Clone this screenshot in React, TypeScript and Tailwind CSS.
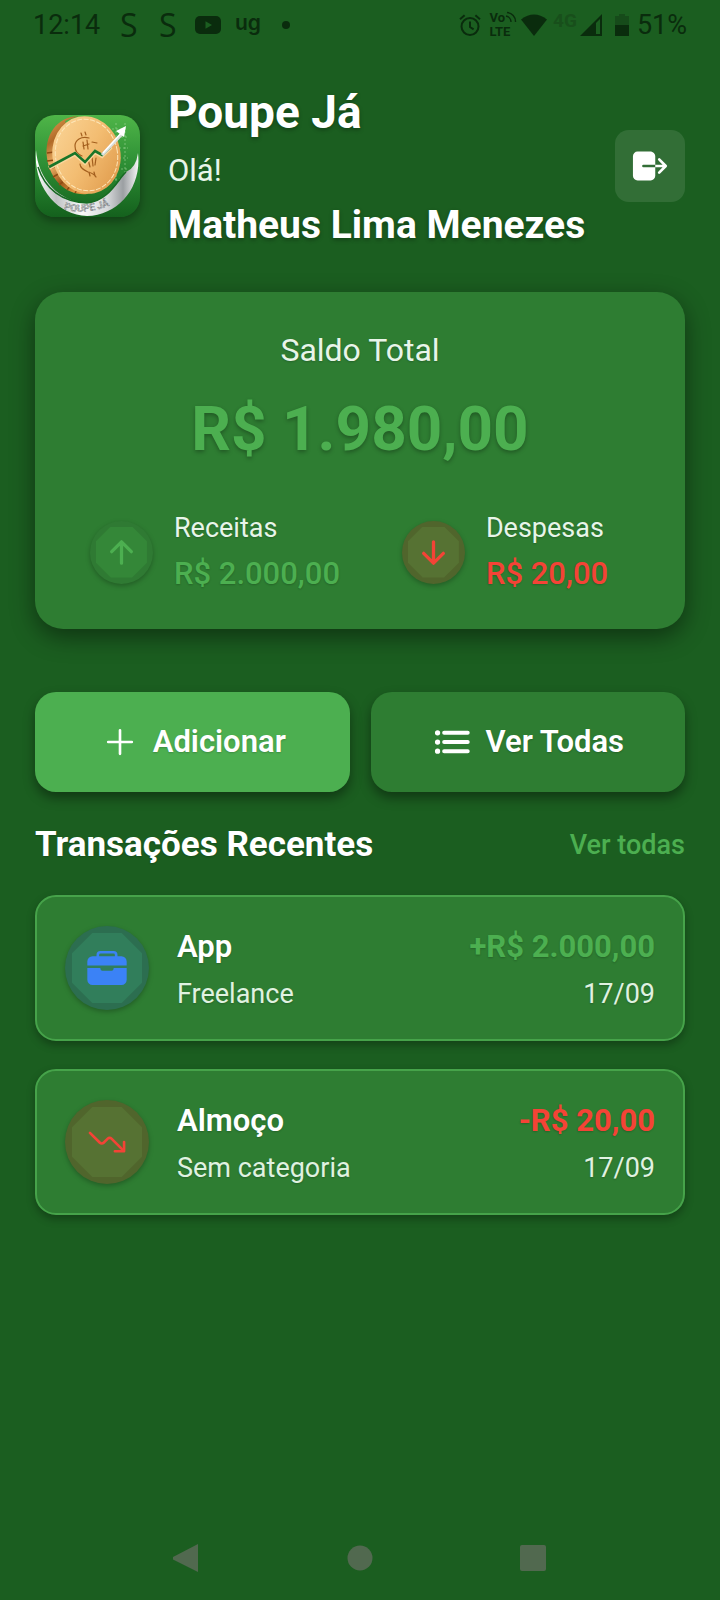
import type { ReactNode } from "react";
import {
  IoAdd,
  IoArrowDown,
  IoArrowUp,
  IoBriefcase,
  IoList,
  IoLogOut,
  IoTrendingDown,
} from "react-icons/io5";

const textShadow = "[text-shadow:0_2px_4px_rgba(0,0,0,0.3)]";
const softShadow = "[text-shadow:0_1px_2px_rgba(0,0,0,0.2)]";

function StatusBar() {
  return (
    <div className="flex h-[50px] items-center justify-between pl-[33px] pr-[33px] text-[#0a2c0d]">
      <div className="flex items-center">
        <span className="w-[87px] text-[27px] leading-8">12:14</span>
        <span className="w-[39px] font-['Open_Sans',sans-serif] text-[32px] font-medium leading-8">S</span>
        <span className="w-[36px] font-['Open_Sans',sans-serif] text-[32px] font-medium leading-8">S</span>
        <svg viewBox="0 0 26 18" className="h-[18px] w-[26px]" aria-hidden="true">
          <rect width="26" height="18" rx="5" fill="currentColor" />
          <path d="M10.5 5.2 17 9l-6.5 3.8z" fill="#1b5e20" />
        </svg>
        <span className="ml-[14px] w-[47px] pb-1 font-['Inter',sans-serif] text-[21px] font-semibold leading-7">ug</span>
        <span className="size-2 rounded-full bg-current" />
      </div>
      <div className="flex items-center">
        <svg viewBox="0 0 22 22" className="size-[22px]" fill="none" stroke="currentColor" strokeWidth="2" aria-hidden="true">
          <circle cx="11" cy="12.5" r="8.5" />
          <path d="M11 7.5v5.5l3.6 2.4" />
          <path d="M1 5.2 5.6 1.2M21 5.2 16.4 1.2" />
        </svg>
        <div className="ml-2 flex flex-col text-[13px] font-bold leading-[14px]">
          <span className="flex">
            Vo
            <svg viewBox="0 0 12 12" className="size-3" fill="none" stroke="currentColor" strokeWidth="1.4" aria-hidden="true">
              <path d="M1 5a6 6 0 0 1 5 6M2 1.5A9 9 0 0 1 10.500 11" />
            </svg>
          </span>
          <span>LTE</span>
        </div>
        <svg viewBox="0 0 26 22" className="ml-1 h-[22px] w-[26px]" aria-hidden="true">
          <path d="M0 5.500Q13-4.500 26 5.500L13 22z" fill="currentColor" />
        </svg>
        <span className="ml-[6px] pb-2 text-[19px] font-bold leading-5 text-[#184f1b]">4G</span>
        <svg viewBox="0 0 22 22" className="ml-[3px] size-[22px]" aria-hidden="true">
          <path d="M22 0v22H0zM20 5v15h-4V9z" fill="currentColor" fillRule="evenodd" />
        </svg>
        <svg viewBox="0 0 14 22" className="ml-[13px] h-[22px] w-[14px]" aria-hidden="true">
          <path d="M0 2h4V0h6v2h4v9H0z" fill="#164b1a" />
          <path d="M0 11h14v11H0z" fill="currentColor" />
        </svg>
        <span className="ml-2 text-[27px] leading-8">51%</span>
      </div>
    </div>
  );
}

function AppLogo() {
  return (
    <svg
      viewBox="0 0 105 102"
      className="h-[102px] w-[105px] shrink-0 rounded-[20px] shadow-[0_4px_10px_rgba(0,0,0,0.35)]"
      role="img"
      aria-label="Poupe Já"
    >
      <defs>
        <linearGradient id="lgBg" x1="0" y1="0" x2="0" y2="1">
          <stop offset="0" stopColor="#4fb548" />
          <stop offset="0.45" stopColor="#2f9136" />
          <stop offset="1" stopColor="#14611d" />
        </linearGradient>
        <linearGradient id="lgCoin" x1="0" y1="0" x2="1" y2="1">
          <stop offset="0" stopColor="#fbd79b" />
          <stop offset="0.5" stopColor="#f3bd72" />
          <stop offset="1" stopColor="#dc9444" />
        </linearGradient>
        <linearGradient id="lgEdge" x1="0" y1="0" x2="0.5" y2="1">
          <stop offset="0" stopColor="#e9a75a" />
          <stop offset="0.3" stopColor="#b06a28" />
          <stop offset="0.55" stopColor="#f0b468" />
          <stop offset="0.8" stopColor="#9c5518" />
          <stop offset="1" stopColor="#e0953f" />
        </linearGradient>
        <linearGradient id="lgBand" x1="0" y1="0" x2="1" y2="0">
          <stop offset="0" stopColor="#ffffff" />
          <stop offset="0.2" stopColor="#bfc2c4" />
          <stop offset="0.45" stopColor="#fafafa" />
          <stop offset="0.7" stopColor="#d5d7d9" />
          <stop offset="0.85" stopColor="#9b9fa2" />
          <stop offset="1" stopColor="#f6f6f6" />
        </linearGradient>
      </defs>
      <rect width="105" height="102" fill="url(#lgBg)" />
      <path d="M81 8v58M90 8v60M73 14h18M86 22h6M84 33h9M84 43h9M82 54h10M80 64h10" stroke="#a9dc9f" strokeWidth="0.8" strokeDasharray="2 2" fill="none" opacity="0.7" />
      <path d="M1 35C3 64 24 87 52 88C74 86 83 64 91 57Q101 53 103 38C107 72 84 100 52 101C22 100-2 72 1 35z" fill="url(#lgBand)" />
      <path d="M3 52C10 74 27 87 52 88C74 86 83 64 91 57" stroke="#176a22" strokeWidth="1.500" fill="none" />
      <path d="M43 1C22 2 9 20 12 43C15 66 33 81 52 79L60 74 30 6z" fill="url(#lgEdge)" />
      <path d="M12 38l7-1M12 46l8-1M14 54l8-3M18 62l7-4M24 70l6-5M32 75l4-5M40 78l3-5" stroke="#8f4b12" strokeWidth="1.500" />
      <ellipse cx="51.500" cy="40" rx="34" ry="39" transform="rotate(-12 51.500 40)" fill="url(#lgCoin)" />
      <ellipse cx="51.500" cy="40" rx="31" ry="36" transform="rotate(-12 51.500 40)" fill="none" stroke="#fde6b8" strokeWidth="1" strokeDasharray="5 1.500" />
      <g fill="none" stroke="#a35f1e" strokeWidth="1.200" strokeLinecap="round">
        <path d="M46 18l1 3M50 17l1 3M54 23c-8-2-14 2-14 8 0 5 2 8 7 10M48 27l1 7M52 25l1 9M48 31l6-2M57 27l5 1" />
        <path d="M53 44l2 8M57 42l1 9M61 43l-1 7M45 49c0 4 4 6 8 8 4 1 7 3 8 5M54 57l1 4M59 57l1 4" />
      </g>
      <path d="M14 53 40 39 50 48 60 37 67 41 76 32" fill="none" stroke="#f9d59b" strokeWidth="4" />
      <path d="M14 52 40 38 50 47 60 36 67 40 75 32" fill="none" stroke="#197528" strokeWidth="2.600" />
      <path d="M67 40 88 18" fill="none" stroke="#d9dedb" strokeWidth="3.200" />
      <path d="M68 38 88 16" fill="none" stroke="#ffffff" strokeWidth="1.500" />
      <path d="M91 11 89 22 81 16z" fill="#ffffff" />
      <path id="logoArc" d="M24 93Q52 103 84 86" fill="none" />
      <text fontFamily="Roboto, sans-serif" fontSize="10" fontWeight="700" fill="#b4b7b9" stroke="#6b6f72" strokeWidth="0.400" strokeDasharray="2 1">
        <textPath href="#logoArc" startOffset="5">POUPE JÁ</textPath>
      </text>
    </svg>
  );
}

interface BadgeProps {
  large?: boolean;
  ring: string;
  face: string;
  icon: ReactNode;
}

/* Round badge with a lighter octagonal face and a shaded rim. */
function Badge({ large, ring, face, icon }: BadgeProps) {
  return (
    <div
      className={`grid shrink-0 place-items-center rounded-full shadow-[0_2px_5px_rgba(0,0,0,0.25)] ${ring} ${
        large ? "size-[84px]" : "size-[63px]"
      }`}
    >
      <div
        className={`grid place-items-center [clip-path:polygon(29%_0,71%_0,100%_29%,100%_71%,71%_100%,29%_100%,0_71%,0_29%)] ${face} ${
          large ? "size-[70px] text-[42px]" : "size-[51px] text-[35px]"
        }`}
      >
        {icon}
      </div>
    </div>
  );
}

interface SummaryProps {
  label: string;
  value: string;
  color: string;
  badge: ReactNode;
}

function Summary({ label, value, color, badge }: SummaryProps) {
  return (
    <div className="flex flex-1 items-center justify-center gap-[21px]">
      {badge}
      <div className="flex flex-col gap-3">
        <span className={`text-[27px] leading-8 text-[#e8f5e9] ${softShadow}`}>{label}</span>
        <span className={`text-[31px] font-medium leading-9 ${color} ${softShadow}`}>{value}</span>
      </div>
    </div>
  );
}

interface TransactionProps {
  title: string;
  category: string;
  amount: string;
  date: string;
  color: string;
  badge: ReactNode;
}

function Transaction({ title, category, amount, date, color, badge }: TransactionProps) {
  return (
    <li className="flex items-center gap-7 rounded-[21px] border-2 border-[#46a34a] bg-[#2e7d32] px-7 py-[29px] shadow-[0_4px_8px_rgba(0,0,0,0.3)]">
      {badge}
      <div className="flex flex-1 flex-col gap-[11px]">
        <span className={`text-[31px] font-semibold leading-10 ${softShadow}`}>{title}</span>
        <span className={`text-[27px] leading-8 text-[#e0f2e1] ${softShadow}`}>{category}</span>
      </div>
      <div className="flex flex-col items-end gap-[11px]">
        <span className={`text-[31px] font-bold leading-10 ${color} ${softShadow}`}>{amount}</span>
        <span className={`text-[27px] leading-8 text-[#e0f2e1] ${softShadow}`}>{date}</span>
      </div>
    </li>
  );
}

export default function App() {
  return (
    <div className="flex min-h-screen flex-col bg-[#1b5e20] font-['Roboto',sans-serif] text-white">
      <StatusBar />

      <main className="flex flex-col px-[35px] pt-8">
        <header className="flex items-center gap-7">
          <AppLogo />
          <div className="flex flex-1 flex-col gap-[10px]">
            <h1 className={`text-[46px] font-bold leading-[60px] ${textShadow}`}>Poupe Já</h1>
            <p className="text-[31px] leading-[38px] text-[#e8f5e9]">Olá!</p>
            <p className={`whitespace-nowrap text-[39px] font-bold leading-[50px] ${textShadow}`}>
              Matheus Lima Menezes
            </p>
          </div>
          <button type="button" aria-label="Sair" className="grid h-[72px] w-[70px] shrink-0 place-items-center rounded-[14px] bg-white/10">
            <IoLogOut className="size-[42px]" />
          </button>
        </header>

        <section className="mt-[42px] flex flex-col rounded-[28px] bg-[#2e7d32] px-[35px] pb-[37px] pt-[35px] shadow-[0_8px_24px_rgba(0,0,0,0.45)]">
          <h2 className={`text-center text-[32px] leading-[46px] text-[#e8f5e9] ${softShadow}`}>Saldo Total</h2>
          <p className={`mt-[19px] text-center text-[62px] font-bold leading-[74px] text-[#4caf50] ${textShadow}`}>
            R$ 1.980,00
          </p>
          <div className="mt-[46px] flex">
            <Summary
              label="Receitas"
              value="R$ 2.000,00"
              color="text-[#4caf50]"
              badge={<Badge ring="bg-[#2f7a33]" face="bg-[#348738]" icon={<IoArrowUp className="text-[#4caf50]" />} />}
            />
            <Summary
              label="Despesas"
              value="R$ 20,00"
              color="text-[#f44336]"
              badge={<Badge ring="bg-[#50652c]" face="bg-[#567233]" icon={<IoArrowDown className="text-[#f44336]" />} />}
            />
          </div>
        </section>

        <div className="mt-[63px] flex gap-[21px]">
          <button type="button" className="flex h-[100px] flex-1 items-center justify-center gap-3 rounded-[21px] bg-[#4caf50] shadow-[0_6px_12px_rgba(0,0,0,0.4)]">
            <IoAdd className="size-[42px]" />
            <span className={`text-[31px] font-semibold leading-10 ${softShadow}`}>Adicionar</span>
          </button>
          <button type="button" className="flex h-[100px] flex-1 items-center justify-center gap-3 rounded-[21px] bg-[#2e7d32] shadow-[0_6px_12px_rgba(0,0,0,0.4)]">
            <IoList className="size-[42px]" />
            <span className={`text-[31px] font-semibold leading-10 ${softShadow}`}>Ver Todas</span>
          </button>
        </div>

        <div className="mt-8 flex items-center justify-between">
          <h2 className={`text-[35px] font-bold leading-[42px] ${softShadow}`}>Transações Recentes</h2>
          <a href="#transacoes" className="text-[27px] font-medium leading-8 text-[#4caf50]">
            Ver todas
          </a>
        </div>

        <ul id="transacoes" className="mt-[29px] flex flex-col gap-7">
          <Transaction
            title="App"
            category="Freelance"
            amount="+R$ 2.000,00"
            date="17/09"
            color="text-[#4caf50]"
            badge={<Badge large ring="bg-[#2c6e50]" face="bg-[#317e5b]" icon={<IoBriefcase className="text-[#3b82f6]" />} />}
          />
          <Transaction
            title="Almoço"
            category="Sem categoria"
            amount="-R$ 20,00"
            date="17/09"
            color="text-[#f44336]"
            badge={<Badge large ring="bg-[#50652c]" face="bg-[#567233]" icon={<IoTrendingDown className="text-[#f44336]" />} />}
          />
        </ul>
      </main>

      <nav aria-label="Sistema" className="mt-auto flex h-[84px] items-center justify-center gap-[145px] text-[#51694f]">
        <button type="button" aria-label="Voltar">
          <svg viewBox="0 0 28 28" className="size-7" fill="currentColor">
            <path d="M25 0v28L0 15.500Q-1 14 0 13z" />
          </svg>
        </button>
        <button type="button" aria-label="Início">
          <svg viewBox="0 0 28 28" className="size-7" fill="currentColor">
            <circle cx="14" cy="14" r="12.500" />
          </svg>
        </button>
        <button type="button" aria-label="Recentes">
          <svg viewBox="0 0 28 28" className="size-7" fill="currentColor">
            <rect x="1" y="1" width="26" height="26" rx="2" />
          </svg>
        </button>
      </nav>
    </div>
  );
}
